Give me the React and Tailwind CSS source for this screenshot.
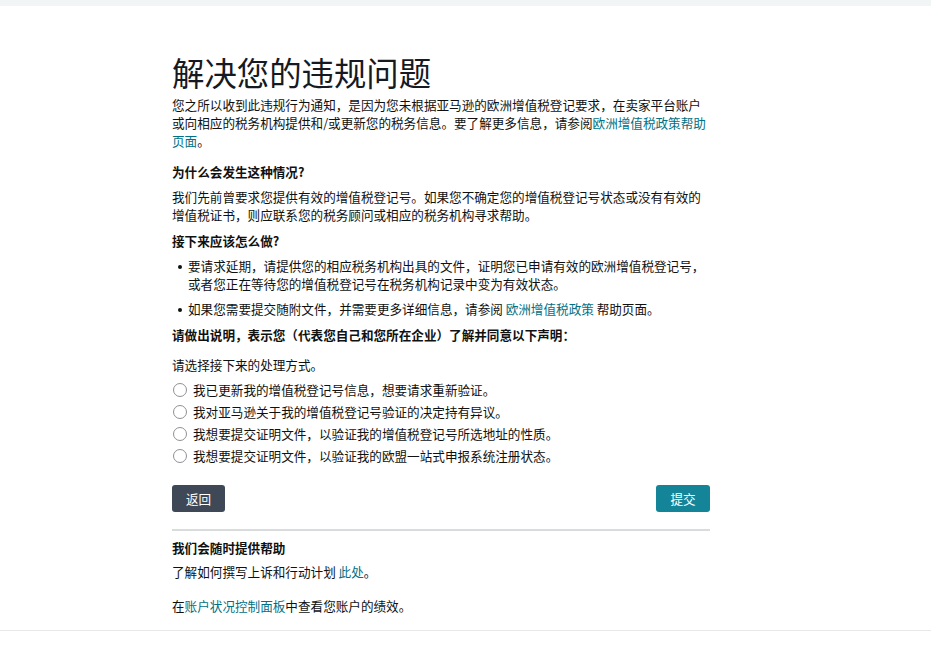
import React from "react";

const radios = [
  "我已更新我的增值税登记号信息，想要请求重新验证。",
  "我对亚马逊关于我的增值税登记号验证的决定持有异议。",
  "我想要提交证明文件，以验证我的增值税登记号所选地址的性质。",
  "我想要提交证明文件，以验证我的欧盟一站式申报系统注册状态。",
];

const Link = ({ children }) => (
  <a href="#" className="text-[#007185] hover:underline">
    {children}
  </a>
);

export default function App() {
  return (
    <div
      className="min-h-[648px] bg-white text-[#0f1111] text-[12.6px] leading-[18px]"
      style={{ fontFamily: '"Noto Sans CJK SC", "Noto Sans", sans-serif' }}
    >
      {/* top strip */}
      <div className="h-[6px] bg-[#f2f5f5]" />

      <div className="border-b border-[#e7e9e9] pb-[15px]">
        <div className="w-[538px] ml-[172px] pt-[46px]">
          <h1 className="text-[32.4px] leading-[40px] font-normal text-[#16191f] mb-[4px]">
            解决您的违规问题
          </h1>
          <p>
            您之所以收到此违规行为通知，是因为您未根据亚马逊的欧洲增值税登记要求，在卖家平台账户或向相应的税务机构提供和/或更新您的税务信息。要了解更多信息，请参阅
            <Link>欧洲增值税政策帮助</Link>
            <Link>页面</Link>。
          </p>

          <h3 className="font-bold mt-[13px]">为什么会发生这种情况?</h3>
          <p className="mt-[7px]">
            我们先前曾要求您提供有效的增值税登记号。如果您不确定您的增值税登记号状态或没有有效的增值税证书，则应联系您的税务顾问或相应的税务机构寻求帮助。
          </p>

          <h3 className="font-bold mt-[8px]">接下来应该怎么做?</h3>
          <ul className="mt-[7px] flex flex-col gap-[7px]">
            <li className="flex">
              <span className="w-[4px] h-[4px] rounded-full bg-[#0f1111] mt-[8px] ml-[6px] mr-[6px] shrink-0" />
              <span>
                要请求延期，请提供您的相应税务机构出具的文件，证明您已申请有效的欧洲增值税登记号，或者您正在等待您的增值税登记号在税务机构记录中变为有效状态。
              </span>
            </li>
            <li className="flex">
              <span className="w-[4px] h-[4px] rounded-full bg-[#0f1111] mt-[8px] ml-[6px] mr-[6px] shrink-0" />
              <span>
                如果您需要提交随附文件，并需要更多详细信息，请参阅 <Link>欧洲增值税政策</Link> 帮助页面。
              </span>
            </li>
          </ul>

          <h3 className="font-bold mt-[8px]">
            请做出说明，表示您（代表您自己和您所在企业）了解并同意以下声明：
          </h3>
          <p className="mt-[12px]">请选择接下来的处理方式。</p>

          <div className="mt-[7px] flex flex-col gap-[4px]">
            {radios.map((r) => (
              <label key={r} className="flex items-center cursor-pointer">
                <span className="w-[14px] h-[14px] rounded-full border border-[#8d9096] bg-white ml-[1px] mr-[6px] shrink-0" />
                <span>{r}</span>
              </label>
            ))}
          </div>

          <div className="flex justify-between mt-[20px]">
            <button className="w-[53px] h-[27px] rounded-[3px] bg-[#3e4856] text-white text-[12.6px]">
              返回
            </button>
            <button className="w-[54px] h-[27px] rounded-[3px] bg-[#148598] text-white text-[12.6px]">
              提交
            </button>
          </div>

          <div className="h-[2px] bg-[#d9dcdc] mt-[17px]" />

          <h3 className="font-bold mt-[8px]">我们会随时提供帮助</h3>
          <p className="mt-[6px]">
            了解如何撰写上诉和行动计划 <Link>此处</Link>。
          </p>
          <p className="mt-[16px]">
            在<Link>账户状况控制面板</Link>中查看您账户的绩效。
          </p>
        </div>
      </div>
    </div>
  );
}
